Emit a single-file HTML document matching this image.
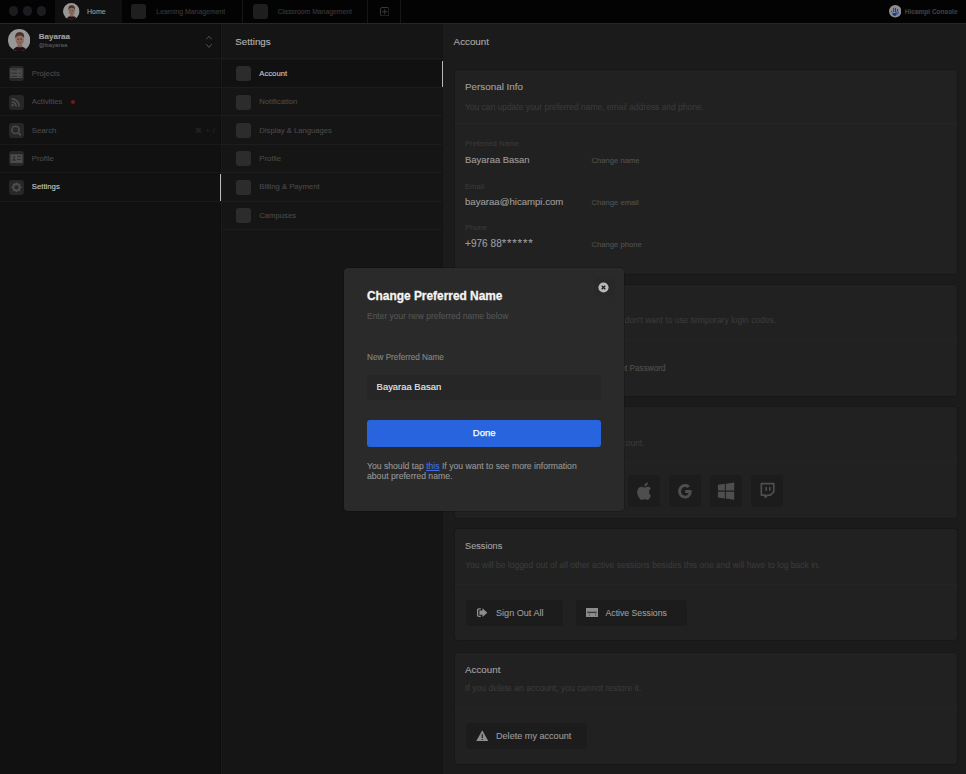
<!DOCTYPE html>
<html><head><meta charset='utf-8'><style>
html,body{margin:0;padding:0;width:966px;height:774px;overflow:hidden;background:#1b1b1b;}
body{position:relative;font-family:"Liberation Sans", sans-serif;}
.r,.t{position:absolute;}
.t{white-space:nowrap;-webkit-text-stroke:0.12px currentColor;}
svg.r{display:block;}
</style></head><body>
<div class='r' style='left:0px;top:0px;width:966px;height:23px;background:#030303;'></div>
<div class='r' style='left:0px;top:23px;width:966px;height:1px;background:#262626;'></div>
<div class='r' style='left:0px;top:24px;width:221px;height:750px;background:#111111;'></div>
<div class='r' style='left:220px;top:24px;width:1px;height:750px;background:#0e0e0e;'></div>
<div class='r' style='left:221px;top:24px;width:1px;height:750px;background:#1b1b1b;'></div>
<div class='r' style='left:222px;top:24px;width:220px;height:750px;background:#151515;'></div>
<div class='r' style='left:442px;top:24px;width:1px;height:750px;background:#141414;'></div>
<div class='r' style='left:443px;top:24px;width:523px;height:750px;background:#1b1b1b;'></div>
<div class='r' style='left:8.7px;top:6.2px;width:9.4px;height:9.4px;background:#1c1c20;border-radius:50%'></div>
<div class='r' style='left:22.6px;top:6.2px;width:9.4px;height:9.4px;background:#1c1c20;border-radius:50%'></div>
<div class='r' style='left:36.699999999999996px;top:6.2px;width:9.4px;height:9.4px;background:#1c1c20;border-radius:50%'></div>
<div class='r' style='left:55px;top:0px;width:67px;height:23px;background:#0f0f0f;'></div>
<svg class='r' style='left:63.2px;top:3.0px' width='16.6' height='16.6' viewBox='0 0 22 22'><defs><clipPath id='avc63'><circle cx='11' cy='11' r='11'/></clipPath></defs><g clip-path='url(#avc63)'><rect width='22' height='22' fill='#979797'/><path d='M4.5 23 Q5 17.5 11.5 17 Q18 17.5 19 23Z' fill='#231012'/><rect x='9.3' y='14' width='4.6' height='4' fill='#806656'/><ellipse cx='11.6' cy='10.6' rx='4.1' ry='5.3' fill='#8a6c60'/><path d='M7.2 9.5 Q6.3 3 11.6 3 Q16.6 3 15.9 9.2 Q15 6.2 11.6 6.3 Q8.4 6.3 7.2 9.5Z' fill='#4b3123'/><circle cx='10.1' cy='10' r='0.6' fill='#2a1a16'/><circle cx='13' cy='10' r='0.6' fill='#2a1a16'/><path d='M10.6 13.2 Q11.6 13.9 12.6 13.2' stroke='#a33030' stroke-width='0.8' fill='none'/></g></svg>
<div class='t' id='home' style='left:87.00px;top:6.37px;font-size:7px;line-height:11px;color:#9a9a9a;font-weight:normal;'>Home</div>
<div class='r' style='left:131px;top:4px;width:15.3px;height:15.3px;background:#1f1f1f;border-radius:3px'></div>
<div class='t' id='lm' style='left:156.30px;top:6.66px;font-size:6.9px;line-height:10.9px;color:#393939;font-weight:normal;'>Learning Management</div>
<div class='r' style='left:242px;top:0px;width:1px;height:23px;background:#161616;'></div>
<div class='r' style='left:253px;top:4px;width:15.3px;height:15.3px;background:#1e1e1e;border-radius:3px'></div>
<div class='t' id='cm' style='left:277.70px;top:6.73px;font-size:6.82px;line-height:10.82px;color:#393939;font-weight:normal;'>Classroom Management</div>
<div class='r' style='left:367px;top:0px;width:1px;height:23px;background:#161616;'></div>
<svg class='r' style='left:379.6px;top:6.7px' width='9.5' height='9.5' viewBox='0 0 9.5 9.5'><rect x='0.5' y='0.5' width='8.5' height='8.5' rx='1.5' fill='none' stroke='#404040' stroke-width='0.9'/><path d='M4.75 2.1V7.4M2.1 4.75H7.4' stroke='#404040' stroke-width='0.9'/></svg>
<div class='r' style='left:400px;top:0px;width:1px;height:23px;background:#161616;'></div>
<svg class='r' style='left:888.8px;top:5.2px' width='12.5' height='12.5' viewBox='0 0 12.5 12.5'><circle cx='6.25' cy='6.25' r='6.2' fill='#8e8e8e'/><g fill='none' stroke='#123a9c' stroke-width='1' stroke-linecap='round'><path d='M4.7 3.3V6.6M6.6 3.3V7.4L7.6 7.8M8.6 4.5V6.6L9.3 7.4L9 8.6L8.2 9.3'/></g><circle cx='2.65' cy='6.4' r='0.55' fill='#123a9c'/><path d='M3.5 7.6 L4.5 7.9 L7.5 8.2 Q8 9.5 7 10.4 L5.2 10.9 L3.6 9.8Z' fill='#123a9c'/></svg>
<div class='t' id='hc' style='left:904.80px;top:6.50px;font-size:6.5px;line-height:10.5px;color:#404040;font-weight:bold;'>Hicampi Console</div>
<svg class='r' style='left:7.85px;top:28.9px' width='22.3' height='22.3' viewBox='0 0 22 22'><defs><clipPath id='avc7'><circle cx='11' cy='11' r='11'/></clipPath></defs><g clip-path='url(#avc7)'><rect width='22' height='22' fill='#979797'/><path d='M4.5 23 Q5 17.5 11.5 17 Q18 17.5 19 23Z' fill='#231012'/><rect x='9.3' y='14' width='4.6' height='4' fill='#806656'/><ellipse cx='11.6' cy='10.6' rx='4.1' ry='5.3' fill='#8a6c60'/><path d='M7.2 9.5 Q6.3 3 11.6 3 Q16.6 3 15.9 9.2 Q15 6.2 11.6 6.3 Q8.4 6.3 7.2 9.5Z' fill='#4b3123'/><circle cx='10.1' cy='10' r='0.6' fill='#2a1a16'/><circle cx='13' cy='10' r='0.6' fill='#2a1a16'/><path d='M10.6 13.2 Q11.6 13.9 12.6 13.2' stroke='#a33030' stroke-width='0.8' fill='none'/></g></svg>
<div class='t' id='bay' style='left:38.80px;top:30.53px;font-size:8px;line-height:12px;color:#a0a0a0;font-weight:bold;'>Bayaraa</div>
<div class='t' id='bay2' style='left:38.80px;top:40.35px;font-size:6.2px;line-height:10.2px;color:#575757;font-weight:normal;'>@bayaraa</div>
<svg class='r' style='left:204px;top:34px' width='10' height='16' viewBox='0 0 10 16'><path d='M2.3 5.3 L5 2.3 L7.7 5.3 M2.3 10.2 L5 13.4 L7.7 10.2' fill='none' stroke='#5a5a5a' stroke-width='0.9'/></svg>
<svg class='r' style='left:9.1px;top:66.10px' width='15' height='15' viewBox='0 0 15 15'><rect width='15' height='15' rx='3' fill='#272727'/><rect x='1.2' y='2.4' width='12.2' height='9.6' fill='#4c4c4c'/><path d='M2.4 3.9h5.6M2.4 7.2h5.6M2.4 10.4h5.6' stroke='#2c2c2c' stroke-width='1'/><path d='M10.3 3.9h1.4M10.3 7.2h1.4M10.3 10.4h1.4' stroke='#2c2c2c' stroke-width='1'/></svg>
<div class='t' id='sbProjects' style='left:31.80px;top:67.74px;font-size:7.75px;line-height:11.75px;color:#484848;font-weight:normal;'>Projects</div>
<svg class='r' style='left:9.1px;top:94.52px' width='15' height='15' viewBox='0 0 15 15'><rect width='15' height='15' rx='3' fill='#272727'/><path d='M2.6 3.8 A7.6 7.6 0 0 1 10.2 11.4 M2.6 6.9 A4.5 4.5 0 0 1 7.1 11.4' fill='none' stroke='#4c4c4c' stroke-width='1.7'/><circle cx='3.6' cy='10.3' r='1.2' fill='#4c4c4c'/></svg>
<div class='t' id='sbActivities' style='left:31.80px;top:96.16px;font-size:7.75px;line-height:11.75px;color:#484848;font-weight:normal;'>Activities</div>
<svg class='r' style='left:9.1px;top:122.94px' width='15' height='15' viewBox='0 0 15 15'><rect width='15' height='15' rx='3' fill='#272727'/><circle cx='6.5' cy='6.9' r='3.6' fill='none' stroke='#4c4c4c' stroke-width='1.6'/><path d='M9.2 9.6 L11.9 12.3' stroke='#4c4c4c' stroke-width='1.8'/></svg>
<div class='t' id='sbSearch' style='left:31.80px;top:124.58px;font-size:7.75px;line-height:11.75px;color:#484848;font-weight:normal;'>Search</div>
<svg class='r' style='left:9.1px;top:151.36px' width='15' height='15' viewBox='0 0 15 15'><rect width='15' height='15' rx='3' fill='#272727'/><rect x='1.5' y='3.3' width='12' height='8.7' fill='#4c4c4c'/><circle cx='5' cy='6' r='1.1' fill='#2c2c2c'/><path d='M3.3 9.8 Q3.5 7.6 5 7.6 Q6.5 7.6 6.7 9.8Z' fill='#2c2c2c'/><path d='M8 5.6h4M8 8.4h4' stroke='#2c2c2c' stroke-width='1'/></svg>
<div class='t' id='sbProfile' style='left:31.80px;top:153.00px;font-size:7.75px;line-height:11.75px;color:#484848;font-weight:normal;'>Profile</div>
<svg class='r' style='left:9.1px;top:179.78px' width='15' height='15' viewBox='0 0 15 15'><rect width='15' height='15' rx='3' fill='#272727'/><circle cx='7.5' cy='7.3' r='3.2' fill='none' stroke='#4c4c4c' stroke-width='2.2'/><path d='M7.5 2.3v2.4M7.5 9.9v2.4M2.5 7.3h2.4M10.1 7.3h2.4M4 3.8l1.6 1.6M9.4 9.2l1.6 1.6M4 10.8l1.6-1.6M9.4 5.4l1.6-1.6' stroke='#4c4c4c' stroke-width='1.6'/></svg>
<div class='t' id='sbSettings' style='left:31.80px;top:181.42px;font-size:7.75px;line-height:11.75px;color:#c8c8c8;font-weight:normal;'>Settings</div>
<div class='r' style='left:0px;top:58px;width:221px;height:1px;background:#191919;'></div>
<div class='r' style='left:0px;top:87px;width:221px;height:1px;background:#191919;'></div>
<div class='r' style='left:0px;top:115px;width:221px;height:1px;background:#191919;'></div>
<div class='r' style='left:0px;top:144px;width:221px;height:1px;background:#191919;'></div>
<div class='r' style='left:0px;top:172px;width:221px;height:1px;background:#191919;'></div>
<div class='r' style='left:0px;top:201px;width:221px;height:1px;background:#191919;'></div>
<div class='r' style='left:70.9px;top:100.0px;width:4.2px;height:4.2px;background:#7c1717;border-radius:50%'></div>
<div class='t' id='kbd' style='left:195.20px;top:124.65px;font-size:7.2px;line-height:11.2px;color:#272727;font-weight:normal;word-spacing:1.2px'>&#8984; + /</div>
<div class='r' style='left:220px;top:174.18px;width:1.3px;height:26.92px;background:#b8b8b8;'></div>
<div class='t' id='sethdr' style='left:235.30px;top:34.50px;font-size:9.8px;line-height:13.8px;color:#b4b4b4;font-weight:normal;'>Settings</div>
<div class='r' style='left:222px;top:59.5px;width:220px;height:27.92px;background:#111111;'></div>
<div class='r' style='left:236.3px;top:66.1px;width:15px;height:15px;background:#2c2c2c;border-radius:3px'></div>
<div class='t' id='st0' style='left:259.30px;top:67.78px;font-size:7.7px;line-height:11.7px;color:#c8c8c8;font-weight:normal;'>Account</div>
<div class='r' style='left:236.3px;top:94.5px;width:15px;height:15px;background:#2c2c2c;border-radius:3px'></div>
<div class='t' id='st1' style='left:259.30px;top:96.20px;font-size:7.7px;line-height:11.7px;color:#484848;font-weight:normal;'>Notification</div>
<div class='r' style='left:236.3px;top:122.9px;width:15px;height:15px;background:#2c2c2c;border-radius:3px'></div>
<div class='t' id='st2' style='left:259.30px;top:124.62px;font-size:7.7px;line-height:11.7px;color:#484848;font-weight:normal;'>Display &amp; Languages</div>
<div class='r' style='left:236.3px;top:151.4px;width:15px;height:15px;background:#2c2c2c;border-radius:3px'></div>
<div class='t' id='st3' style='left:259.30px;top:153.04px;font-size:7.7px;line-height:11.7px;color:#484848;font-weight:normal;'>Profile</div>
<div class='r' style='left:236.3px;top:179.8px;width:15px;height:15px;background:#2c2c2c;border-radius:3px'></div>
<div class='t' id='st4' style='left:259.30px;top:181.46px;font-size:7.7px;line-height:11.7px;color:#484848;font-weight:normal;'>Billing &amp; Payment</div>
<div class='r' style='left:236.3px;top:208.2px;width:15px;height:15px;background:#2c2c2c;border-radius:3px'></div>
<div class='t' id='st5' style='left:259.30px;top:209.88px;font-size:7.7px;line-height:11.7px;color:#484848;font-weight:normal;'>Campuses</div>
<div class='r' style='left:222px;top:58px;width:220px;height:1px;background:#1c1c1c;'></div>
<div class='r' style='left:222px;top:87px;width:220px;height:1px;background:#1c1c1c;'></div>
<div class='r' style='left:222px;top:115px;width:220px;height:1px;background:#1c1c1c;'></div>
<div class='r' style='left:222px;top:144px;width:220px;height:1px;background:#1c1c1c;'></div>
<div class='r' style='left:222px;top:172px;width:220px;height:1px;background:#1c1c1c;'></div>
<div class='r' style='left:222px;top:201px;width:220px;height:1px;background:#1c1c1c;'></div>
<div class='r' style='left:222px;top:229px;width:220px;height:1px;background:#1c1c1c;'></div>
<div class='r' style='left:441.5px;top:60.6px;width:1.4px;height:26.82px;background:#b8b8b8;'></div>
<div class='t' id='acchdr' style='left:453.60px;top:34.50px;font-size:9.8px;line-height:13.8px;color:#a8a8a8;font-weight:normal;'>Account</div>
<div class='r' style='left:443px;top:59px;width:523px;height:1px;background:#1a1a1a;'></div>
<div class='r' style='left:455px;top:70px;width:502px;height:204px;background:#212121;border-radius:3px;box-shadow:0 0 0 1px rgba(0,0,0,0.12)'></div>
<div class='t' id='pi' style='left:465.00px;top:79.66px;font-size:9.85px;line-height:13.85px;color:#a0a0a0;font-weight:normal;'>Personal Info</div>
<div class='t' id='pisub' style='left:465.00px;top:101.15px;font-size:8.45px;line-height:12.45px;color:#3a3a3a;font-weight:normal;'>You can update your preferred name, email address and phone.</div>
<div class='r' style='left:455px;top:123px;width:502px;height:1px;background:#252525;'></div>
<div class='t' id='pn' style='left:465.00px;top:138.12px;font-size:7.65px;line-height:11.65px;color:#393939;font-weight:normal;'>Preferred Name</div>
<div class='t' id='pnv' style='left:465.00px;top:153.10px;font-size:9.45px;line-height:13.45px;color:#9c9c9c;font-weight:normal;'>Bayaraa Basan</div>
<div class='t' id='cn' style='left:591.60px;top:155.32px;font-size:7.65px;line-height:11.65px;color:#505050;font-weight:normal;'>Change name</div>
<div class='t' style='left:465.00px;top:181.32px;font-size:7.65px;line-height:11.65px;color:#393939;font-weight:normal;'>Email</div>
<div class='t' id='em' style='left:465.00px;top:194.87px;font-size:9.6px;line-height:13.6px;color:#9c9c9c;font-weight:normal;'>bayaraa@hicampi.com</div>
<div class='t' style='left:591.60px;top:197.32px;font-size:7.65px;line-height:11.65px;color:#505050;font-weight:normal;'>Change email</div>
<div class='t' style='left:465.00px;top:222.32px;font-size:7.65px;line-height:11.65px;color:#393939;font-weight:normal;'>Phone</div>
<div class='t' id='ph' style='left:465.00px;top:236.45px;font-size:10.1px;line-height:14.1px;color:#9c9c9c;font-weight:normal;'>+976 88<span style='font-size:11.5px;letter-spacing:0.8px'>******</span></div>
<div class='t' style='left:591.60px;top:239.32px;font-size:7.65px;line-height:11.65px;color:#505050;font-weight:normal;'>Change phone</div>
<div class='r' style='left:455px;top:284.5px;width:502px;height:111.5px;background:#212121;border-radius:3px;box-shadow:0 0 0 1px rgba(0,0,0,0.12)'></div>
<div class='t' style='left:465.00px;top:294.54px;font-size:10px;line-height:14px;color:#a0a0a0;font-weight:normal;'>Password</div>
<div class='t' id='pwsub' style='right:190.00px;top:314.15px;font-size:8.45px;line-height:12.45px;color:#3a3a3a;font-weight:normal;'>Set a password if you don&#39;t want to use temporary login codes.</div>
<div class='r' style='left:455px;top:339.5px;width:502px;height:1px;background:#242424;'></div>
<div class='t' style='left:465.00px;top:360.54px;font-size:10px;line-height:14px;color:#9c9c9c;font-weight:normal;'>&#8226;&#8226;&#8226;&#8226;&#8226;&#8226;&#8226;&#8226;</div>
<div class='t' id='setpw' style='right:300.50px;top:362.86px;font-size:8.2px;line-height:12.2px;color:#505050;font-weight:normal;'>Set Password</div>
<div class='r' style='left:455px;top:406.7px;width:502px;height:111.6px;background:#212121;border-radius:3px;box-shadow:0 0 0 1px rgba(0,0,0,0.12)'></div>
<div class='t' style='left:465.00px;top:416.54px;font-size:10px;line-height:14px;color:#a0a0a0;font-weight:normal;'>Connected Accounts</div>
<div class='t' id='casub' style='right:321.50px;top:437.35px;font-size:8.45px;line-height:12.45px;color:#3a3a3a;font-weight:normal;'>Connect your social accounts to sign in to your account.</div>
<div class='r' style='left:455px;top:461.5px;width:502px;height:1px;background:#242424;'></div>
<svg class='r' style='left:464.4px;top:474.5px' width='32' height='32' viewBox='0 0 32 32'><rect width='32' height='32' rx='3' fill='#1c1c1c'/><g transform='translate(16 16) scale(1.13) translate(-16 -16)'></g></svg>
<svg class='r' style='left:505.4px;top:474.5px' width='32' height='32' viewBox='0 0 32 32'><rect width='32' height='32' rx='3' fill='#1c1c1c'/><g transform='translate(16 16) scale(1.13) translate(-16 -16)'></g></svg>
<svg class='r' style='left:546.4px;top:474.5px' width='32' height='32' viewBox='0 0 32 32'><rect width='32' height='32' rx='3' fill='#1c1c1c'/><g transform='translate(16 16) scale(1.13) translate(-16 -16)'></g></svg>
<svg class='r' style='left:587.4px;top:474.5px' width='32' height='32' viewBox='0 0 32 32'><rect width='32' height='32' rx='3' fill='#1c1c1c'/><g transform='translate(16 16) scale(1.13) translate(-16 -16)'></g></svg>
<svg class='r' style='left:628.4px;top:474.5px' width='32' height='32' viewBox='0 0 32 32'><rect width='32' height='32' rx='3' fill='#1c1c1c'/><g transform='translate(16 16) scale(1.13) translate(-16 -16)'><g transform='translate(0.9 0)'><path d='M19.6 16.6c0-1.9 1.6-2.8 1.6-2.8-.9-1.3-2.3-1.5-2.8-1.5-1.2-.1-2.3.7-2.9.7-.6 0-1.5-.7-2.5-.7-1.3 0-2.5.8-3.2 1.9-1.4 2.4-.4 5.9 1 7.8.6.9 1.4 2 2.4 1.9.9 0 1.3-.6 2.4-.6s1.4.6 2.4.6c1 0 1.7-1 2.3-1.9.7-1.1 1-2.1 1-2.2 0 0-2-.8-1.7-3.2zM17.7 10.9c.5-.6.9-1.5.8-2.4-.8 0-1.7.5-2.3 1.1-.5.6-.9 1.5-.8 2.3.9.1 1.8-.4 2.3-1z' fill='#4e4e4e'/></g></g></svg>
<svg class='r' style='left:669.4px;top:474.5px' width='32' height='32' viewBox='0 0 32 32'><rect width='32' height='32' rx='3' fill='#1c1c1c'/><g transform='translate(16 16) scale(1.13) translate(-16 -16)'><path d='M21.6 15.2h-5.5v2.5h3.1c-.4 1.6-1.7 2.5-3.1 2.5-2 0-3.6-1.7-3.6-3.9s1.6-3.9 3.6-3.9c.9 0 1.7.3 2.3.9l1.8-1.8c-1.1-1-2.5-1.6-4.1-1.6-3.4 0-6.2 2.8-6.2 6.4s2.8 6.4 6.2 6.4c3.2 0 5.8-2.4 5.8-6.2 0-.5-.1-.9-.3-1.3z' fill='#4e4e4e'/></g></svg>
<svg class='r' style='left:710.4px;top:474.5px' width='32' height='32' viewBox='0 0 32 32'><rect width='32' height='32' rx='3' fill='#1c1c1c'/><g transform='translate(16 16) scale(1.13) translate(-16 -16)'><g transform='translate(16 16) scale(1.12) translate(-16 -16)'><path d='M9.6 11.1l5.5-.8v5.4H9.6zM15.9 10.2l6.6-1v6.5h-6.6zM9.6 16.5h5.5v5.4l-5.5-.8zM15.9 16.5h6.6v6.5l-6.6-1z' fill='#4e4e4e'/></g></g></svg>
<svg class='r' style='left:751.4px;top:474.5px' width='32' height='32' viewBox='0 0 32 32'><rect width='32' height='32' rx='3' fill='#1c1c1c'/><g transform='translate(16 16) scale(1.13) translate(-16 -16)'><path d='M11 9.5h11v7.2l-3 3h-2.5l-2 2v-2H11z' fill='none' stroke='#4e4e4e' stroke-width='1.5' stroke-linejoin='round'/><path d='M15.3 12.5v3.2M18.5 12.5v3.2' stroke='#4e4e4e' stroke-width='1.5'/></g></svg>
<div class='r' style='left:455px;top:528.9px;width:502px;height:111px;background:#212121;border-radius:3px;box-shadow:0 0 0 1px rgba(0,0,0,0.12)'></div>
<div class='t' id='ses' style='left:465.00px;top:539.51px;font-size:9.2px;line-height:13.2px;color:#a0a0a0;font-weight:normal;'>Sessions</div>
<div class='t' id='sessub' style='left:465.00px;top:558.79px;font-size:8.52px;line-height:12.52px;color:#3a3a3a;font-weight:normal;'>You will be logged out of all other active sessions besides this one and will have to log back in.</div>
<div class='r' style='left:455px;top:583.5px;width:502px;height:1px;background:#242424;'></div>
<div class='r' style='left:466px;top:599.8px;width:97.4px;height:26px;background:#1c1c1c;border-radius:3px'></div>
<svg class='r' style='left:476px;top:606px' width='12' height='12' viewBox='0 0 12 12'><path d='M4.8 2.9H2.9Q1.6 2.9 1.6 4.2V9.1Q1.6 10.4 2.9 10.4H4.8' fill='none' stroke='#8e8e8e' stroke-width='1.3'/><path d='M3.4 4.6H6.5V2.3L11.3 6.65 6.5 11V8.7H3.4Z' fill='#8e8e8e'/></svg>
<div class='t' id='soa' style='left:496.00px;top:606.80px;font-size:9.1px;line-height:13.1px;color:#9a9a9a;font-weight:normal;'>Sign Out All</div>
<div class='r' style='left:575.5px;top:599.8px;width:111.2px;height:26px;background:#1c1c1c;border-radius:3px'></div>
<svg class='r' style='left:586px;top:607.9px' width='12' height='9' viewBox='0 0 12 9'><rect x='0' y='0' width='12' height='9' fill='#8c8c8c'/><path d='M1.3 4.3H10.7' stroke='#202020' stroke-width='1'/><path d='M3.3 3.2V8M9.6 3.2V8' stroke='#5a5a5a' stroke-width='0.8'/></svg>
<div class='t' id='as' style='left:605.50px;top:607.14px;font-size:8.7px;line-height:12.7px;color:#9a9a9a;font-weight:normal;'>Active Sessions</div>
<div class='r' style='left:455px;top:652.7px;width:502px;height:111.1px;background:#212121;border-radius:3px;box-shadow:0 0 0 1px rgba(0,0,0,0.12)'></div>
<div class='t' id='acc2' style='left:465.00px;top:663.30px;font-size:9.8px;line-height:13.8px;color:#a0a0a0;font-weight:normal;'>Account</div>
<div class='t' id='delsub' style='left:465.00px;top:681.82px;font-size:8.6px;line-height:12.6px;color:#3a3a3a;font-weight:normal;'>If you delete an account, you cannot restore it.</div>
<div class='r' style='left:455px;top:707.5px;width:502px;height:1px;background:#242424;'></div>
<div class='r' style='left:466px;top:723.4px;width:121px;height:26px;background:#1c1c1c;border-radius:3px'></div>
<svg class='r' style='left:476.2px;top:729.5px' width='12.5' height='11.5' viewBox='0 0 12.5 11.5'><path d='M6.25 0.2 L12.4 11.3 H0.1Z' fill='#8e8e8e'/><path d='M6.25 4.2v3.9' stroke='#181818' stroke-width='1.1'/><circle cx='6.25' cy='9.4' r='0.65' fill='#181818'/></svg>
<div class='t' id='dma' style='left:496.00px;top:730.40px;font-size:9.1px;line-height:13.1px;color:#9a9a9a;font-weight:normal;'>Delete my account</div>
<div class='r' style='left:343.5px;top:267.6px;width:280.8px;height:243.2px;background:#2a2a2a;border-radius:4px;box-shadow:0 0 0 1px rgba(0,0,0,0.15)'></div>
<div class='r' style='left:594px;top:277px;width:20.7px;height:20px;background:#282828;border-radius:4px'></div>
<svg class='r' style='left:598.4px;top:281.6px' width='11' height='11' viewBox='0 0 11 11'><circle cx='5.5' cy='5.5' r='5.1' fill='#bababa'/><path d='M3.7 3.7L7.3 7.3M7.3 3.7L3.7 7.3' stroke='#1a1a2a' stroke-width='1.3'/></svg>
<div class='t' id='mt' style='left:367.00px;top:289.33px;font-size:11.9px;line-height:15.9px;color:#f4f4f4;font-weight:bold;-webkit-text-stroke:0.3px currentColor'>Change Preferred Name</div>
<div class='t' id='ms' style='left:367.00px;top:310.04px;font-size:8.46px;line-height:12.46px;color:#545454;font-weight:normal;'>Enter your new preferred name below</div>
<div class='t' id='ml' style='left:367.00px;top:352.06px;font-size:8.2px;line-height:12.2px;color:#858585;font-weight:normal;'>New Preferred Name</div>
<div class='r' style='left:367.1px;top:374.8px;width:234.2px;height:25.6px;background:#262626;border-radius:2px'></div>
<div class='t' id='mv' style='left:376.60px;top:380.10px;font-size:9.45px;line-height:13.45px;color:#ececec;font-weight:normal;'>Bayaraa Basan</div>
<div class='r' style='left:367.1px;top:419.8px;width:234.2px;height:26.9px;background:#2864de;border-radius:3px'></div>
<div class='t' id='done' style='left:434.20px;width:100px;text-align:center;top:426.16px;font-size:9.5px;line-height:13.5px;color:#ffffff;font-weight:normal;-webkit-text-stroke:0.25px currentColor'>Done</div>
<div class='t' id='mf1' style='left:367.00px;top:459.69px;font-size:8.64px;line-height:12.64px;color:#949494;font-weight:normal;'>You should tap <span style='color:#3e6fe6;text-decoration:underline'>this</span> If you want to see more information</div>
<div class='t' id='mf2' style='left:367.00px;top:469.69px;font-size:8.64px;line-height:12.64px;color:#949494;font-weight:normal;'>about preferred name.</div>
</body></html>
